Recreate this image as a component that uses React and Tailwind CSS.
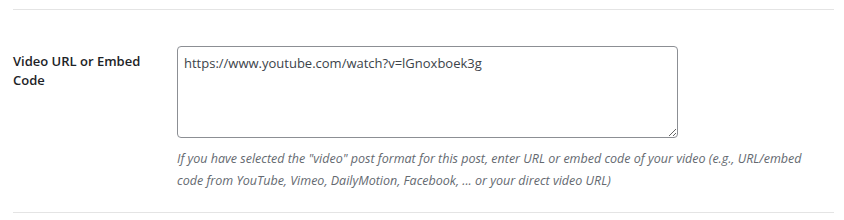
import React from 'react';

const App = () => {
  return (
    <div className="w-[844px] h-[220px] bg-white px-[13px] pt-[9px] font-['Open_Sans',sans-serif] text-[#2c3338]">
      <div className="w-[821px] border-t border-[#e4e4e4]">
        <div className="flex pt-[36px] pb-[20px]">
          <div className="w-[164px] shrink-0 pr-[24px] pt-[6px] text-[13px] font-semibold leading-[19px] text-[#1d2327]">
            Video URL or Embed Code
          </div>
          <div className="flex flex-col">
            <textarea
              className="w-[501px] h-[92px] rounded-[4px] border border-[#8c8f94] px-[6px] py-[6px] text-[13px] leading-[20px] text-[#3c434a] outline-none"
              defaultValue="https://www.youtube.com/watch?v=lGnoxboek3g"
              spellCheck={false}
            />
            <p className="mt-[10px] w-[645px] text-[12.5px] italic leading-[22px] text-[#646970]">
              If you have selected the "video" post format for this post, enter URL or embed code of your video (e.g., URL/embed code from YouTube, Vimeo, DailyMotion, Facebook, ... or your direct video URL)
            </p>
          </div>
        </div>
      </div>
      <div className="w-[821px] border-t border-[#e4e4e4]" />
    </div>
  );
};

export default App;
